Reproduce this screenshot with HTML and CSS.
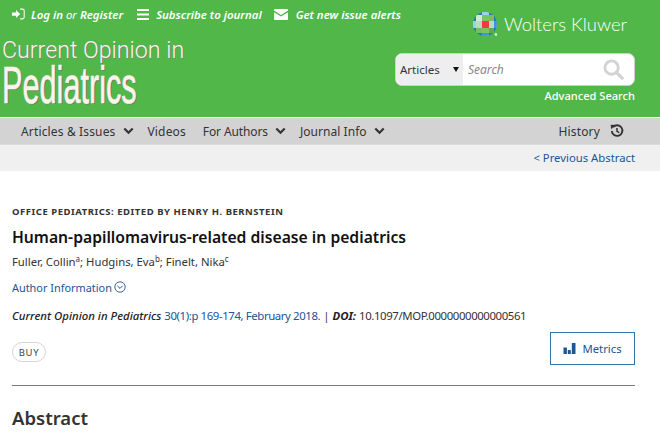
FILE: index.html
```html
<!DOCTYPE html>
<html lang="en">
<head>
<meta charset="utf-8">
<title>Human-papillomavirus-related disease in pediatrics</title>
<link rel="stylesheet" href="styles.css">
</head>
<body>
<header class="masthead">
  <div class="mast-left">
    <div class="toplinks">
      <a class="toplink tl-login"><svg class="ic-login" viewBox="0 0 16 14"><path d="M0 5h5V2l5 5-5 5V9H0z" fill="#fff"/><path d="M10 1h3a2 2 0 0 1 2 2v8a2 2 0 0 1-2 2h-3" fill="none" stroke="#fff" stroke-width="1.3"/></svg><span><b>Log in</b> or <b>Register</b></span></a>
      <a class="toplink tl-sub"><svg class="ic-menu" viewBox="0 0 12 11"><path d="M0 0h12v2H0zM0 4.500h12v2H0zM0 9h12v2H0z" fill="#fff"/></svg><b>Subscribe to journal</b></a>
      <a class="toplink"><svg class="ic-mail" viewBox="0 0 14 11"><path d="M1 0h12a1 1 0 0 1 1 1v.6L7 6 0 1.600V1a1 1 0 0 1 1-1zM0 3.200 7 7.600l7-4.400V10a1 1 0 0 1-1 1H1a1 1 0 0 1-1-1z" fill="#fff"/></svg><b>Get new issue alerts</b></a>
    </div>
    <div class="journal">
      <div class="journal-top">Current Opinion in</div>
      <div class="journal-name">Pediatrics</div>
    </div>
  </div>
  <div class="mast-right">
    <div class="wk">
      <svg class="wk-logo" viewBox="0 0 24 24">
        <defs><clipPath id="c"><circle cx="12" cy="12" r="12"/></clipPath></defs>
        <g clip-path="url(#c)">
          <rect width="24" height="24" fill="#1f7cc0"/>
          <rect x="3" y="3" width="18" height="18" fill="#8ccb6a"/>
          <rect x="9" y="0" width="7" height="24" fill="#b5dcc0"/>
          <rect x="0" y="9" width="24" height="7" fill="#b5dcc0"/>
          <rect x="0" y="9" width="3" height="7" fill="#9fd0e8"/>
          <rect x="21" y="9" width="3" height="7" fill="#3f97d0"/>
          <rect x="9" y="0" width="7" height="3" fill="#9fd0e8"/>
          <rect x="9" y="21" width="7" height="3" fill="#3f97d0"/>
          <rect x="3" y="3" width="6" height="6" fill="#d4e8d8"/>
          <rect x="16" y="16" width="5" height="5" fill="#5cae45"/>
          <rect x="16" y="3" width="5" height="6" fill="#78bf5a"/>
          <rect x="3" y="16" width="6" height="5" fill="#78bf5a"/>
          <rect x="9" y="3" width="7" height="6" fill="#7cc45e"/>
          <rect x="9" y="16" width="7" height="5" fill="#7cc45e"/>
          <rect x="9" y="9" width="7" height="7" fill="#ee3d42"/>
        </g>
        <circle cx="23" cy="22.500" r="1.400" fill="#dfeedd"/>
      </svg>
      <span class="wk-name">Wolters Kluwer</span>
    </div>
    <form class="search">
      <div class="search-scope"><span>Articles</span><i class="caret"></i></div>
      <div class="search-input"><em>Search</em>
        <svg class="ic-search" viewBox="0 0 22 22"><circle cx="9" cy="9" r="7" fill="none" stroke="#d3d3d3" stroke-width="3"/><path d="M14 14l6 6" stroke="#d3d3d3" stroke-width="3.500" stroke-linecap="round"/></svg>
      </div>
    </form>
    <a class="advanced">Advanced Search</a>
  </div>
</header>

<nav class="mainnav">
  <div class="nav-items">
    <a class="nav-item nav-first">Articles &amp; Issues<svg class="chev" viewBox="0 0 11 8"><path d="M1.300 1.500 5.500 5.700 9.700 1.500" fill="none" stroke="#333" stroke-width="2.200"/></svg></a>
    <a class="nav-item nav-videos">Videos</a>
    <a class="nav-item nav-authors">For Authors<svg class="chev" viewBox="0 0 11 8"><path d="M1.300 1.500 5.500 5.700 9.700 1.500" fill="none" stroke="#333" stroke-width="2.200"/></svg></a>
    <a class="nav-item nav-info">Journal Info<svg class="chev" viewBox="0 0 11 8"><path d="M1.300 1.500 5.500 5.700 9.700 1.500" fill="none" stroke="#333" stroke-width="2.200"/></svg></a>
  </div>
  <a class="nav-item history">History<svg class="ic-history" viewBox="0 0 14 14"><path d="M3 3.200A5.300 5.300 0 1 1 1.800 7" fill="none" stroke="#333" stroke-width="1.900"/><path d="M.7 .8 5.400 1 1 5.200z" fill="#333"/><path d="M7 4v3.400l2.300 1.200" fill="none" stroke="#333" stroke-width="1.500"/></svg></a>
</nav>

<div class="subbar"><a>&lt; Previous Abstract</a></div>

<main class="article">
  <div class="kicker">OFFICE PEDIATRICS: EDITED BY HENRY H. BERNSTEIN</div>
  <h1 class="title">Human-papillomavirus-related disease in pediatrics</h1>
  <div class="authors">Fuller, Collin<sup>a</sup>; Hudgins, Eva<sup>b</sup>; Finelt, Nika<sup>c</sup></div>
  <a class="author-info">Author Information<svg class="ic-circle" viewBox="0 0 12 12"><circle cx="6" cy="6" r="5.200" fill="none" stroke="#205493" stroke-width=".9"/><path d="M3.400 4.800 6 7.400l2.600-2.600" fill="none" stroke="#205493" stroke-width="1"/></svg></a>
  <div class="citation"><em>Current Opinion in Pediatrics</em> <a>30(1):p 169-174, February 2018.</a> <span class="sep">|</span> <b><em>DOI:</em></b> <span class="doi">10.1097/MOP.0000000000000561</span></div>
  <div class="actions">
    <a class="buy">BUY</a>
    <a class="metrics"><svg class="ic-bars" viewBox="0 0 12 11"><path d="M0 4.500h3.400V11H0zM4.300 7h3v4h-3zM8.300 0H12v11H8.300z" fill="#205493"/></svg>Metrics</a>
  </div>
  <hr class="rule">
  <h2 class="abstract">Abstract</h2>
</main>
</body>
</html>
```

FILE: styles.css
```css
* { box-sizing: border-box; }
html, body { margin: 0; padding: 0; }
body {
  width: 660px;
  height: 440px;
  overflow: hidden;
  background: #fff;
  font-family: "Noto Sans", "Open Sans", sans-serif;
  color: #333;
}
a { color: inherit; text-decoration: none; }

.masthead {
  height: 117px;
  background: #50b748;
  display: flex;
  justify-content: space-between;
  color: #fff;
}
.mast-left { padding-top: 6px; flex: 1; min-width: 0; }
.toplinks {
  display: flex;
  height: 16px;
  align-items: center;
  padding-left: 12px;
  font-size: 11.400px;
  font-style: italic;
}
.toplink { display: flex; align-items: center; white-space: nowrap; }
.tl-login { margin-right: 14px; }
.tl-sub { margin-right: 12px; }
.toplink b { font-weight: 600; }
.ic-login { width: 13px; height: 12px; margin-right: 6px; }
.ic-menu { width: 12px; height: 11px; margin-right: 7px; }
.ic-mail { width: 14px; height: 11px; margin-right: 8px; }

.journal { padding: 15px 0 0 2px; color: #fbf3ec; }
.journal-top {
  font-family: "Roboto", sans-serif;
  font-size: 23.200px;
  line-height: 26px;
  font-weight: 300;
  white-space: nowrap;
  text-shadow: 1px 1px 0 #7d8a70;
}
.journal-name {
  font-family: "Liberation Sans", sans-serif;
  font-size: 52px;
  line-height: 44px;
  font-weight: 400;
  white-space: nowrap;
  transform: scaleX(.59);
  transform-origin: left center;
  -webkit-text-stroke: .7px #fbf3ec;
  text-shadow: 2px 1px 0 #6f7a66;
}

.mast-right {
  flex: none;
  width: 240px;
  margin-right: 25px;
  display: flex;
  flex-direction: column;
  align-items: flex-end;
  padding-top: 11px;
}
.wk { display: flex; align-items: center; height: 26px; margin-right: 8px; }
.wk-logo { width: 24px; height: 24px; flex: none; }
.wk-name {
  font-family: "Lato", sans-serif;
  font-size: 18.400px;
  line-height: 26px;
  font-weight: 300;
  margin-left: 7px;
  white-space: nowrap;
}
.search {
  width: 240px;
  height: 33px;
  margin-top: 16px;
  display: flex;
  border-radius: 7px;
  overflow: hidden;
  border: 1px solid #cfcfcf;
  background: #fff;
}
.search-scope {
  width: 67px;
  background: #eee;
  display: flex;
  align-items: center;
  justify-content: space-between;
  padding: 0 4px 0 4px;
  font-size: 11.500px;
  color: #333;
}
.caret {
  width: 0;
  height: 0;
  border-left: 3.500px solid transparent;
  border-right: 3.500px solid transparent;
  border-top: 5px solid #111;
}
.search-input {
  flex: 1;
  display: flex;
  align-items: center;
  justify-content: space-between;
  padding: 0 10px 0 5px;
  font-size: 12px;
  color: #888;
}
.ic-search { width: 21px; height: 21px; }
.advanced { font-size: 11.100px; line-height: 16px; margin-top: 2px; font-weight: 500; white-space: nowrap; }

.mainnav {
  height: 27px;
  margin-top: 1px;
  background: #d3d3d3;
  border-bottom: 1px solid #dcdcdc;
  display: flex;
  justify-content: space-between;
  align-items: center;
  padding: 0 36px 0 21px;
  font-size: 12px;
  color: #333;
  letter-spacing: .15px;
}
.nav-items { display: flex; }
.nav-item { display: flex; align-items: center; white-space: nowrap; }
.chev { width: 11px; height: 8px; margin-left: 7px; }
.nav-videos { margin-left: 14px; }
.nav-authors { margin-left: 17px; letter-spacing: -.12px; }
.nav-info { margin-left: 14px; letter-spacing: .05px; }
.ic-history { width: 14px; height: 14px; margin-left: 10px; }

.subbar {
  height: 26px;
  background: #f0f0f0;
  display: flex;
  justify-content: flex-end;
  align-items: center;
  padding: 0 25px 2px 0;
  font-size: 11.300px;
  color: #205493;
}

.article { padding: 33px 25px 0 12px; }
.kicker {
  font-size: 9.500px;
  line-height: 16px;
  font-weight: 700;
  letter-spacing: .53px;
  color: #333;
  white-space: nowrap;
}
.title {
  margin: 6px 0 0;
  font-size: 15.700px;
  line-height: 22px;
  font-weight: 600;
  color: #111;
  white-space: nowrap;
}
.authors {
  margin-top: 6px;
  font-size: 11.300px;
  line-height: 16px;
  color: #333;
  white-space: nowrap;
}
.authors sup { font-size: 8px; line-height: 0; vertical-align: 4px; }
.author-info {
  display: flex;
  align-items: center;
  margin-top: 9px;
  height: 16px;
  font-size: 10.900px;
  color: #205493;
  white-space: nowrap;
}
.ic-circle { width: 12px; height: 12px; margin-left: 2px; }
.citation {
  margin-top: 13px;
  font-size: 11.400px;
  line-height: 16px;
  color: #333;
  white-space: nowrap;
}
.citation em { font-weight: 500; color: #222; }
.citation a { color: #205493; letter-spacing: -.4px; }
.citation b em { font-weight: 700; }
.doi { letter-spacing: -.4px; }
.actions {
  display: flex;
  justify-content: space-between;
  align-items: flex-start;
  margin-top: 8px;
}
.buy {
  margin-top: 10px;
  width: 34px;
  height: 20px;
  border: 1px solid #d6d6d6;
  border-radius: 10px;
  font-size: 9.500px;
  letter-spacing: .6px;
  color: #444;
  display: flex;
  align-items: center;
  justify-content: center;
}
.metrics {
  width: 85px;
  height: 33px;
  border: 1px solid #2f74ab;
  display: flex;
  align-items: center;
  justify-content: center;
  font-size: 11.300px;
  color: #205493;
}
.ic-bars { width: 13px; height: 11px; margin-right: 6px; }
.rule { border: 0; height: 1px; background: #7a7a7a; margin: 20px 0 0; }
.abstract {
  margin: 19px 0 0;
  font-size: 18.500px;
  line-height: 26px;
  font-weight: 600;
  color: #333;
}
```
